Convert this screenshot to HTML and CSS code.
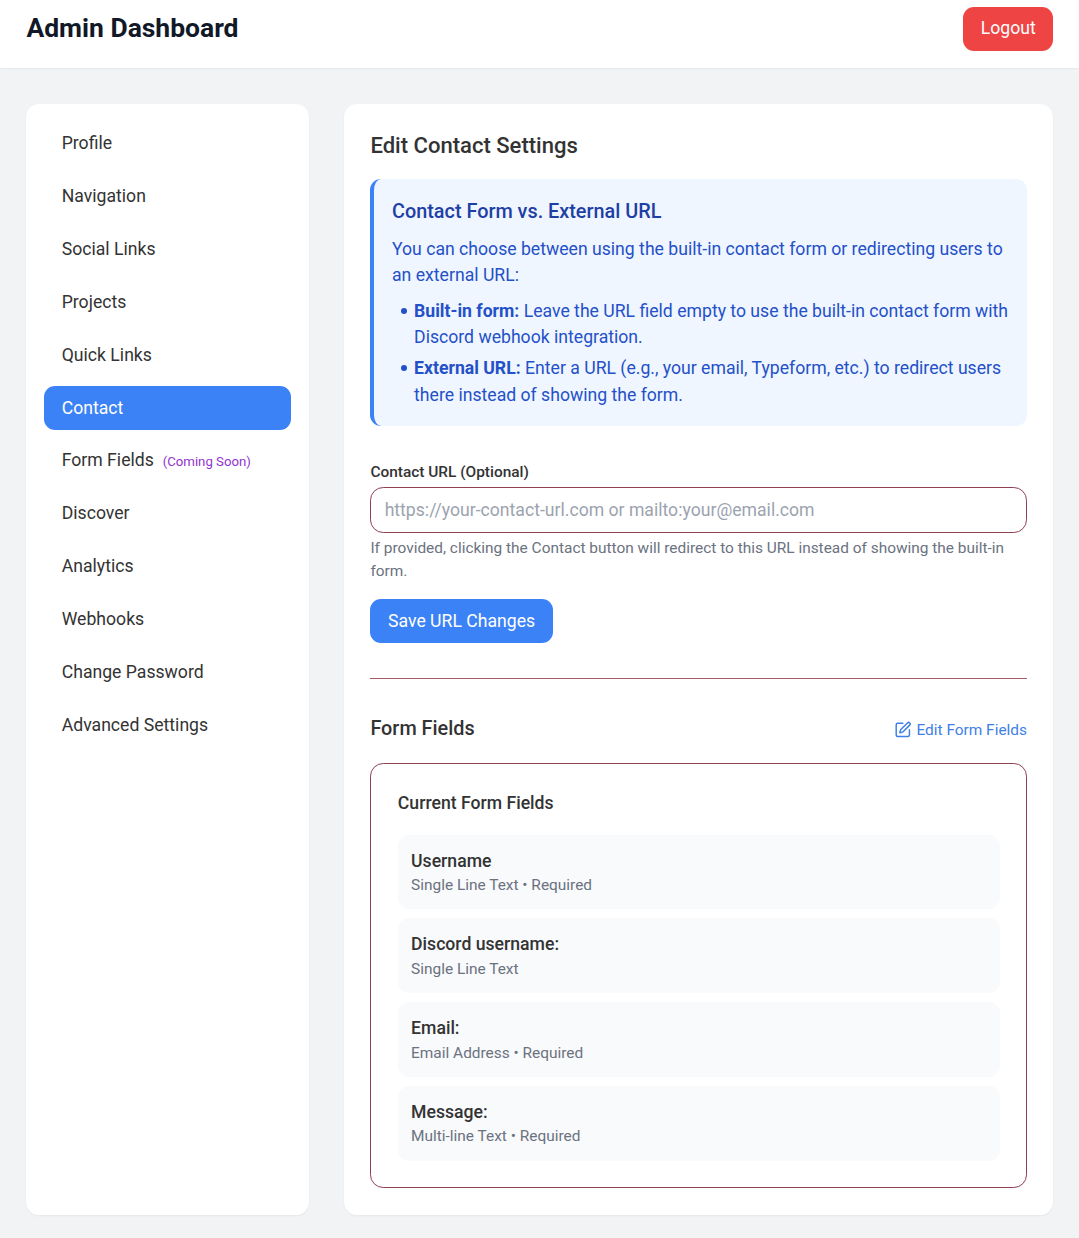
FILE: index.html
```html
<!DOCTYPE html>
<html lang="en">
<head>
<meta charset="utf-8">
<title>Admin Dashboard</title>
<link rel="stylesheet" href="styles.css">
</head>
<body>
<header class="topbar">
  <h1 class="brand">Admin Dashboard</h1>
  <button class="btn btn-danger">Logout</button>
</header>
<div class="layout">
  <nav class="card sidebar">
    <a class="nav-item">Profile</a>
    <a class="nav-item">Navigation</a>
    <a class="nav-item">Social Links</a>
    <a class="nav-item">Projects</a>
    <a class="nav-item">Quick Links</a>
    <a class="nav-item active">Contact</a>
    <a class="nav-item">Form Fields<span class="soon">(Coming Soon)</span></a>
    <a class="nav-item">Discover</a>
    <a class="nav-item">Analytics</a>
    <a class="nav-item">Webhooks</a>
    <a class="nav-item">Change Password</a>
    <a class="nav-item">Advanced Settings</a>
  </nav>
  <main class="card content">
    <h2 class="page-title">Edit Contact Settings</h2>
    <section class="notice">
      <h3 class="notice-title">Contact Form vs. External URL</h3>
      <p class="notice-text">You can choose between using the built-in contact form or redirecting users to an external URL:</p>
      <ul class="notice-list">
        <li><strong>Built-in form:</strong> Leave the URL field empty to use the built-in contact form with Discord webhook integration.</li>
        <li><strong>External URL:</strong> Enter a URL (e.g., your email, Typeform, etc.) to redirect users there instead of showing the form.</li>
      </ul>
    </section>
    <form class="url-form">
      <label class="label" for="contact-url">Contact URL (Optional)</label>
      <input class="input" id="contact-url" type="text" placeholder="https://your-contact-url.com or mailto:your@email.com">
      <p class="help">If provided, clicking the Contact button will redirect to this URL instead of showing the built-in form.</p>
      <button class="btn btn-primary" type="button">Save URL Changes</button>
    </form>
    <hr class="divider">
    <section class="fields">
      <div class="fields-head">
        <h3 class="fields-title">Form Fields</h3>
        <a class="edit-link">
          <svg class="edit-icon" viewBox="0 0 24 24" fill="none" stroke="currentColor" stroke-width="2" stroke-linecap="round" stroke-linejoin="round"><path d="M12 3H5a2 2 0 0 0-2 2v14a2 2 0 0 0 2 2h14a2 2 0 0 0 2-2v-7"/><path d="M18.375 2.625a1 1 0 0 1 3 3l-9.013 9.014a2 2 0 0 1-.853.505l-2.873.84a.5.5 0 0 1-.62-.62l.84-2.873a2 2 0 0 1 .506-.852z"/></svg>
          Edit Form Fields
        </a>
      </div>
      <div class="field-box">
        <h4 class="field-box-title">Current Form Fields</h4>
        <div class="field-list">
          <div class="field"><div class="field-name">Username</div><div class="field-meta">Single Line Text • Required</div></div>
          <div class="field"><div class="field-name">Discord username:</div><div class="field-meta">Single Line Text</div></div>
          <div class="field"><div class="field-name">Email:</div><div class="field-meta">Email Address • Required</div></div>
          <div class="field"><div class="field-name">Message:</div><div class="field-meta">Multi-line Text • Required</div></div>
        </div>
      </div>
    </section>
  </main>
</div>
</body>
</html>
```
FILE: styles.css
```css
* { box-sizing: border-box; margin: 0; padding: 0; }
html { font-size: 17.64px; }
body {
  font-family: Roboto, sans-serif;
  line-height: 1.5;
  color: #333;
  background: #f2f3f5;
  height: 1238px;
  overflow: hidden;
}
.topbar {
  display: flex;
  justify-content: space-between;
  align-items: center;
  height: 68.3px;
  padding: 6.6px 1.45rem 1rem 1.5rem;
  background: #fff;
  box-shadow: 0 1px 2px rgba(0, 0, 0, .05);
}
.brand { font-size: 1.5rem; line-height: 2rem; font-weight: 700; color: #111827; padding-bottom: .1rem; }
.btn {
  display: inline-block;
  border: 0;
  border-radius: .625rem;
  padding: .5rem 1rem;
  font: inherit;
  line-height: 1.5rem;
  color: #fff;
}
.btn-danger { background: #ef4444; }
.btn-primary { background: #3b82f6; }
.layout { display: flex; gap: 2rem; padding: 2rem 1.45rem 0 1.5rem; height: 1146.3px; }
.card { background: #fff; border-radius: .75rem; box-shadow: 0 1px 2px rgba(0, 0, 0, .05); }
.sidebar { width: 16rem; flex: none; padding: 1rem; display: flex; flex-direction: column; gap: .5rem; }
.nav-item { display: block; height: 2.5rem; padding: .5rem 1rem; border-radius: .625rem; white-space: nowrap; }
.nav-item.active { background: #3b82f6; color: #fff; }
.soon { margin-left: .5rem; font-size: .75rem; color: #9333cf; }
.content { flex: 1; min-width: 0; padding: 1.5rem; }
.page-title { font-size: 1.25rem; line-height: 1.75rem; font-weight: 500; padding-top: .05rem; margin-bottom: .95rem; }
.notice {
  border-left: .25rem solid #3b82f6;
  border-radius: .625rem;
  background: #eff6ff;
  padding: 1.04rem 1rem 1rem;
  margin-bottom: 1.98rem;
  color: #2450c8;
}
.notice-title { font-size: 1.125rem; line-height: 1.75rem; font-weight: 500; color: #1e40a5; margin-bottom: .47rem; }
.notice-list { list-style: none; margin-top: .5rem; padding-left: 1.25rem; }
.notice-list li { position: relative; }
.notice-list li::before {
  content: "";
  position: absolute;
  left: -13.5px;
  top: 10.4px;
  width: 6px;
  height: 6px;
  border-radius: 50%;
  background: currentColor;
}
.notice-list li + li { margin-top: .25rem; }
.label { display: block; font-size: .875rem; line-height: 1.25rem; font-weight: 500; margin-bottom: .25rem; }
.input {
  display: block;
  width: 100%;
  height: 2.625rem;
  padding: .5rem .75rem;
  border: 1px solid #8f4053;
  border-radius: .75rem;
  font: inherit;
  background: #fff;
}
.input::placeholder { color: #9ca3af; opacity: 1; }
.help { font-size: .875rem; line-height: 1.3rem; color: #6b7280; margin: .2rem 0 .92rem; }
.divider { height: 1px; border: 0; background: #a45a6b; margin-top: 2rem; }
.fields { padding-top: 2rem; }
.fields-head { display: flex; justify-content: space-between; align-items: center; margin-bottom: 1rem; }
.fields-title { font-size: 1.125rem; line-height: 1.75rem; font-weight: 500; }
.edit-link { display: flex; align-items: center; gap: .25rem; font-size: .875rem; line-height: 1.25rem; color: #3f80e6; }
.edit-icon { width: 1rem; height: 1rem; }
.field-box { border: 1px solid #8f4053; border-radius: .75rem; padding: 1.5rem; }
.field-box-title { font-size: 1rem; font-weight: 500; margin-bottom: 1rem; }
.field-list { display: grid; gap: .5rem; }
.field { background: #f9fafc; border-radius: .625rem; padding: .75rem; }
.field-name { font-weight: 500; line-height: 1.5rem; }
.field-meta { font-size: .875rem; line-height: 1.25rem; color: #6b7280; }
```
